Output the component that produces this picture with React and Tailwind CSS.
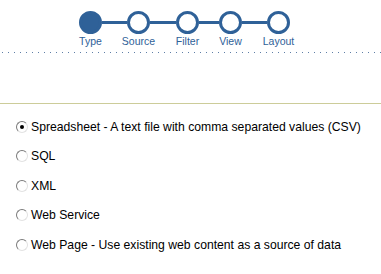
import React from 'react';

const steps = [
  { label: 'Type', done: true },
  { label: 'Source' },
  { label: 'Filter' },
  { label: 'View' },
  { label: 'Layout' },
];

// connector widths between the step circles
const links = ['w-[25px]', 'w-[26px]', 'w-[20px]', 'w-[25px]'];

const options = [
  { label: 'Spreadsheet - A text file with comma separated values (CSV)', checked: true },
  { label: 'SQL' },
  { label: 'XML' },
  { label: 'Web Service' },
  { label: 'Web Page - Use existing web content as a source of data' },
];

const Radio = ({ checked }) => (
  <span className="w-[12px] h-[12px] rounded-full bg-white border border-t-[#7a7a7a] border-l-[#7a7a7a] border-b-[#e2e2e2] border-r-[#e2e2e2] flex items-center justify-center shrink-0">
    {checked && <span className="w-[4px] h-[4px] rounded-full bg-black" />}
  </span>
);

const App = () => {
  return (
    <div className="min-h-screen bg-white font-['Liberation_Sans',Arial,sans-serif]">
      {/* Wizard steps */}
      <div className="flex items-start pl-[79px] pt-[11px]">
        {steps.map((step, i) => (
          <React.Fragment key={step.label}>
            <div className="flex flex-col items-center w-[23px]">
              <div
                className={
                  'w-[23px] h-[23px] rounded-full border-[3px] border-[#2f6198] ' +
                  (step.done ? 'bg-[#2f6198]' : 'bg-white')
                }
              />
              <span className="mt-[1px] text-[10.5px] leading-[12px] text-[#2f6198] whitespace-nowrap">
                {step.label}
              </span>
            </div>
            {i < links.length && <div className={links[i] + ' h-[3px] mt-[10px] bg-[#2f6198]'} />}
          </React.Fragment>
        ))}
      </div>

      <div className="mt-[5px] h-px bg-[linear-gradient(to_right,#5f7ea6_1px,transparent_1px)] bg-[length:6px_1px] ml-[2px]" />

      <div className="mt-[50px] h-px bg-[#cccc99]" />

      {/* Source types */}
      <div className="mt-[8px] flex flex-col">
        {options.map((opt) => (
          <label key={opt.label} className="h-[29.5px] flex items-center pl-[16px] gap-[3px] text-[12.2px] text-black">
            <Radio checked={opt.checked} />
            <span>{opt.label}</span>
          </label>
        ))}
      </div>
    </div>
  );
};

export default App;
